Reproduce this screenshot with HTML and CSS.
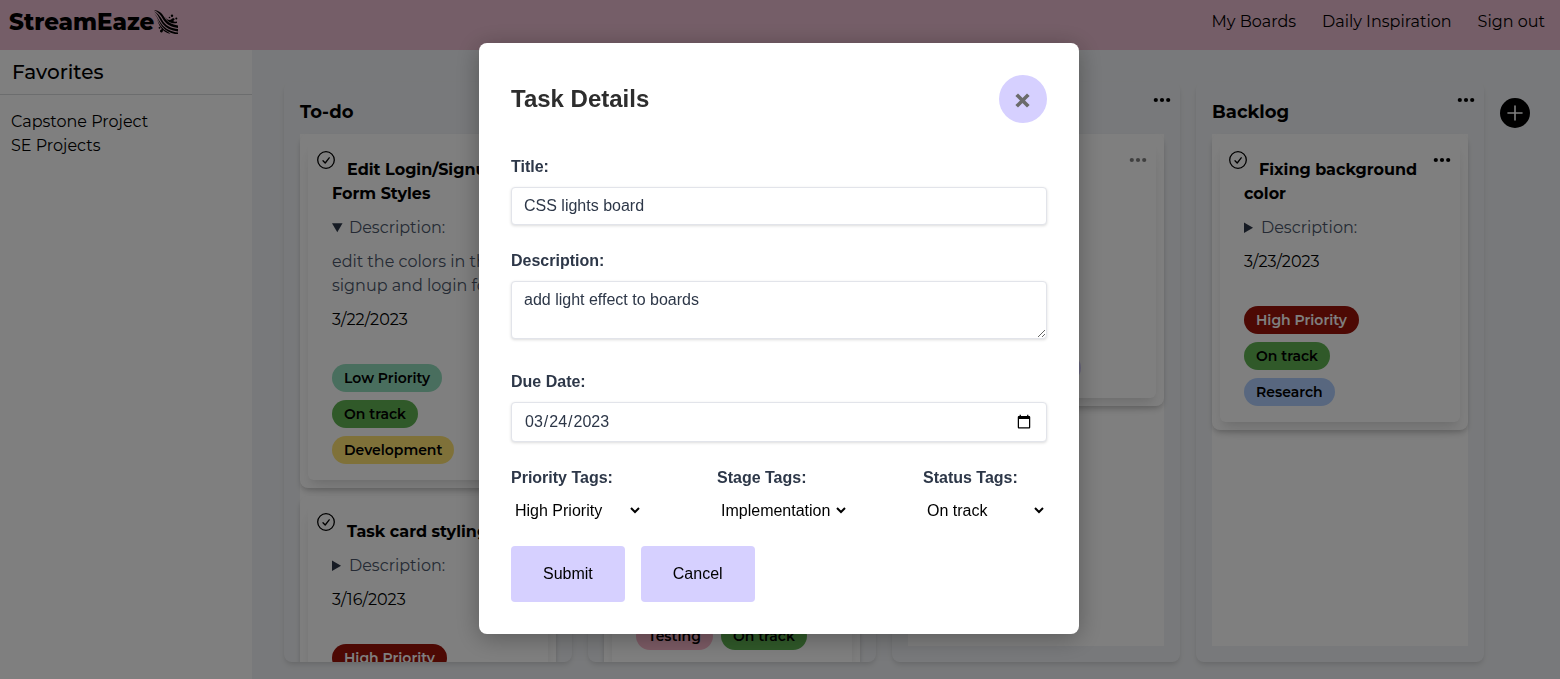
FILE: index.html
```html
<!DOCTYPE html>
<html lang="en-US">
<head>
<meta charset="utf-8">
<meta name="viewport" content="width=device-width, initial-scale=1">
<title>StreamEaze</title>
<link rel="stylesheet" href="styles.css">
</head>
<body>
<svg class="sprite" width="0" height="0" aria-hidden="true">
  <symbol id="check" viewBox="0 0 24 24"><path fill="none" stroke="currentColor" stroke-width="1.3" stroke-linecap="round" stroke-linejoin="round" d="M9 12.7 11.2 15 15.2 9.8M20.3 12a8.3 8.3 0 1 1-16.6 0 8.3 8.3 0 0 1 16.6 0Z"/></symbol>
  <symbol id="dots" viewBox="0 0 24 24"><circle cx="5.8" cy="12" r="2.1"/><circle cx="12" cy="12" r="2.1"/><circle cx="18.2" cy="12" r="2.1"/></symbol>
</svg>
<div class="app">
  <header class="topbar">
    <a class="brand" href="#">StreamEaze<svg class="brand-icon" viewBox="0 0 24 24" aria-hidden="true">
      <path d="M0 0C5 .5 8 3 10.500 7.500C13.500 12.500 18 14.500 24 15.500V18C17 17 12.500 14.500 9.500 10C7 5.500 4.500 2 0 0Z"/>
      <path d="M0 1.200C5 4 7 8 9.500 12C13 16.500 18 18.500 24 19V21.500C17 20.500 12 18 8.800 14C5.500 9.500 4 4 0 1.200Z"/>
      <path d="M0 3C3 6 5 10.500 8 14.500C11 18.500 17 22 24 22.500V24H21C16 23 12 21 8 16.500C5 12.500 3.500 7 0 3Z"/>
      <path d="M3 9C4.500 12.500 6 15.500 8.500 18C10.500 20.500 14 21.500 16.500 24C12 23 9.500 21 7.500 18.500C5 15.500 4 12 3 9Z"/>
      <path d="M11 6.500C13.500 11 16 10.500 18 8.800C19.500 7.800 21 8.500 20.500 9.800C18.500 11 19 12.200 23 11.500V13C17 14.300 13 11.500 11 6.500Z"/>
      <circle cx="18" cy="5.800" r="1.200"/><circle cx="22.300" cy="8.600" r="1"/><circle cx="15.500" cy="7.500" r=".8"/>
      <path d="M8.700 18C10 19.500 8.800 20 8.800 21A1.400 1.400 0 1 1 6.500 20C7.500 19.500 8 19 8.700 18Z"/><circle cx="5.500" cy="17.800" r=".9"/>
    </svg></a>
    <nav class="nav">
      <a href="#">My Boards</a>
      <a href="#">Daily Inspiration</a>
      <a href="#">Sign out</a>
    </nav>
  </header>
  <div class="workspace">
    <aside class="sidebar">
      <h2 class="sidebar-title">Favorites</h2>
      <ul class="favorites">
        <li><a href="#">Capstone Project</a></li>
        <li><a href="#">SE Projects</a></li>
      </ul>
    </aside>
    <main class="board">
      <section class="column">
        <header class="column-head"><h3>To-do</h3></header>
        <div class="column-list">
          <article class="card"><div class="card-body">
            <button class="card-check" aria-label="Complete"><svg><use href="#check"/></svg></button>
            <h4 class="card-title">Edit Login/Signup Form Styles</h4>
            <details open><summary>Description:</summary><p>edit the colors in the signup and login form</p></details>
            <time class="card-date">3/22/2023</time>
            <div class="tags"><span class="tag tag-low">Low Priority</span><span class="tag tag-track">On track</span><span class="tag tag-dev">Development</span></div>
          </div></article>
          <article class="card"><div class="card-body">
            <button class="card-check" aria-label="Complete"><svg><use href="#check"/></svg></button>
            <h4 class="card-title">Task card styling</h4>
            <details><summary>Description:</summary></details>
            <time class="card-date">3/16/2023</time>
            <div class="tags"><span class="tag tag-high">High Priority</span></div>
          </div></article>
        </div>
      </section>
      <section class="column">
        <header class="column-head"></header>
        <div class="column-list">
          <article class="card"><div class="card-body card-body-tall">
            <div class="tags"><span class="tag tag-test">Testing</span><span class="tag tag-track">On track</span></div>
          </div></article>
        </div>
      </section>
      <section class="column">
        <header class="column-head"><button class="dots" aria-label="Column menu"><svg><use href="#dots"/></svg></button></header>
        <div class="column-list">
          <article class="card"><div class="card-body">
            <button class="dots card-menu card-menu-muted" aria-label="Card menu"><svg><use href="#dots"/></svg></button>
            <h4 class="card-title">CSS lights</h4>
            <details><summary>Description:</summary></details>
            <time class="card-date">3/24/2023</time>
            <div class="tags"><span class="tag tag-high">High Priority</span><span class="tag tag-track">On track</span><span class="tag tag-impl">Implementation</span></div>
          </div></article>
        </div>
      </section>
      <section class="column">
        <header class="column-head"><h3>Backlog</h3><button class="dots" aria-label="Column menu"><svg><use href="#dots"/></svg></button></header>
        <div class="column-list">
          <article class="card"><div class="card-body">
            <button class="card-check" aria-label="Complete"><svg><use href="#check"/></svg></button>
            <button class="dots card-menu" aria-label="Card menu"><svg><use href="#dots"/></svg></button>
            <h4 class="card-title">Fixing background color</h4>
            <details><summary>Description:</summary></details>
            <time class="card-date">3/23/2023</time>
            <div class="tags"><span class="tag tag-high">High Priority</span><span class="tag tag-track">On track</span><span class="tag tag-research">Research</span></div>
          </div></article>
        </div>
      </section>
      <button class="add" aria-label="Add column"><svg viewBox="0 0 30 30"><path d="M15 8v14M8 15h14" stroke="currentColor" stroke-width="1.6" stroke-linecap="round"/></svg></button>
    </main>
  </div>
</div>
<div class="overlay">
  <form class="modal" role="dialog" aria-labelledby="modal-title">
    <header class="modal-head">
      <h2 id="modal-title">Task Details</h2>
      <button type="button" class="close" aria-label="Close"><svg viewBox="0 0 48 48"><path d="M19 21 28 30M28 21 19 30" stroke="currentColor" stroke-width="3.700" stroke-linecap="square"/></svg></button>
    </header>
    <label for="title">Title:</label>
    <input class="field" id="title" type="text" value="CSS lights board">
    <label for="description">Description:</label>
    <textarea class="field field-area" id="description">add light effect to boards</textarea>
    <label for="due">Due Date:</label>
    <input class="field field-date" id="due" type="date" value="2023-03-24">
    <div class="selects">
      <div><label for="priority">Priority Tags:</label><select id="priority" class="select-wide"><option>High Priority</option><option>Low Priority</option></select></div>
      <div><label for="stage">Stage Tags:</label><select id="stage" class="select-wide"><option>Implementation</option><option>Development</option><option>Research</option><option>Testing</option></select></div>
      <div><label for="status">Status Tags:</label><select id="status" class="select-narrow"><option>On track</option></select></div>
    </div>
    <div class="actions">
      <button type="submit">Submit</button>
      <button type="button">Cancel</button>
    </div>
  </form>
</div>
</body>
</html>
```
FILE: styles.css
```css
* { box-sizing: border-box; }
body, h2, h3, h4, p, ul { margin: 0; padding: 0; }
body {
  font: 16px/24px Montserrat, Inter, sans-serif;
  color: #000;
  background: #f1f3f6;
}
a { color: inherit; text-decoration: none; }
ul { list-style: none; }
button { font: inherit; color: inherit; border: 0; padding: 0; background: none; cursor: pointer; }
svg { display: block; }
.sprite { position: absolute; }

.app { height: 100vh; display: flex; flex-direction: column; overflow: hidden; }
.topbar {
  display: flex; justify-content: space-between; align-items: flex-start;
  height: 50px; padding: 10px 15px 0 9px; background: #ebbdd0; flex: none;
}
.brand { display: flex; font-size: 23px; font-weight: 800; }
.brand-icon { width: 24px; height: 24px; }
.nav { display: flex; gap: 26px; }

.workspace { flex: 1; display: flex; min-height: 0; }
.sidebar { width: 252px; flex: none; background: #fff; }
.sidebar-title {
  padding: 10px 12px; font-size: 20px; font-weight: 500;
  border-bottom: 1px solid #d9dadd;
}
.favorites { padding: 15px 11px; }

.board { flex: 1; display: flex; gap: 16px; padding: 32px 30px 17px 32px; min-width: 0; overflow: hidden; }
.column {
  width: 288px; flex: none; display: flex; flex-direction: column;
  padding: 16px; border-radius: 8px; overflow: hidden;
  box-shadow: 0 4px 6px -1px rgba(0, 0, 0, .1), 0 2px 4px -1px rgba(0, 0, 0, .06);
}
.column-head { position: relative; flex: none; height: 36px; padding-top: 2px; }
.column-head h3 { font-size: 18px; font-weight: 700; }
.dots, .card-check { position: absolute; width: 24px; height: 24px; }
.dots svg, .card-check svg { width: 24px; height: 24px; }
.column-head .dots { top: -10px; right: -10px; }
.column-list { flex: 1 0 auto; display: flex; flex-direction: column; gap: 8px; background: #fff; }
.card {
  padding: 8px; border-radius: 8px; background: #fff;
  box-shadow: 0 4px 6px -1px rgba(0, 0, 0, .16), 0 2px 4px -1px rgba(0, 0, 0, .08);
}
.card-body {
  position: relative; padding: 16px 24px 8px; border-radius: 6px;
  box-shadow: 0 10px 15px -3px rgba(0, 0, 0, .1), 0 4px 6px -2px rgba(0, 0, 0, .05);
}
.card-body-tall { min-height: 524px; display: flex; align-items: flex-end; }
.card-check { top: 6px; left: 6px; }
.card-menu { top: 6px; right: 6px; }
.card-menu-muted { opacity: .5; }
.card-title { margin-bottom: 10px; font-size: 16px; font-weight: 700; text-indent: 15px; }
details { margin-bottom: 10px; color: #4a5568; }
summary { cursor: default; }
summary::marker { color: #2d3748; }
details p { margin-top: 10px; }
.card-date { display: block; margin-bottom: 32px; }
.tags { display: flex; flex-wrap: wrap; }
.tag {
  margin: 0 8px 8px 0; padding: 4px 12px; border-radius: 14px;
  font-size: 14px; line-height: 20px; font-weight: 600;
}
.tag-low { background: #92dcbc; }
.tag-track { background: #60b353; }
.tag-dev { background: #ffe373; }
.tag-high { background: #9b1208; color: #fff; }
.tag-test { background: #f9b6ca; }
.tag-impl { background: #d6d0ff; }
.tag-research { background: #b0cfff; }
.add { width: 30px; height: 30px; margin-top: 16px; border-radius: 50%; background: #000; color: #fff; flex: none; }

.overlay {
  position: fixed; inset: 0; display: flex; align-items: center; justify-content: center; padding: 0 2px 2px 0;
  background: rgba(0, 0, 0, .5); font-family: "Helvetica Neue", "Liberation Sans", Arial, sans-serif; font-size: 16px;
}
.modal {
  display: flex; flex-direction: column; width: 600px; max-width: 100%; padding: 32px;
  border-radius: 8px; background: #fff; box-shadow: 0 4px 24px rgba(0, 0, 0, .3);
}
.modal-head { display: flex; justify-content: space-between; align-items: center; margin-bottom: 32px; }
.modal-head h2 { font-size: 24px; font-weight: 700; color: #2d2d2d; }
.close { width: 48px; height: 48px; border-radius: 50%; background: #d6d0ff; color: #6b6b6b; }
label { display: block; margin-bottom: 8px; font-weight: 700; color: #2d3748; }
.field {
  width: 100%; height: 38px; margin: 0 0 24px; padding: 6px 12px; font: inherit; color: #2d3748;
  border: 1px solid #e2e4ea; border-radius: 4px; background: #fff; box-shadow: 0 1px 3px rgba(0, 0, 0, .14);
}
.field-area { height: 58px; margin-bottom: 31px; resize: vertical; }
.field-date { height: 40px; }
.selects { display: flex; justify-content: space-between; margin-bottom: 24px; }
select { display: block; height: 24px; border: 0; background: #fff; color: #000; font: inherit; }
.select-wide { width: 132px; }
.select-narrow { width: 124px; }
.actions { display: flex; gap: 16px; }
.actions button { padding: 16px 32px; border-radius: 4px; background: #d6d0ff; }
```
